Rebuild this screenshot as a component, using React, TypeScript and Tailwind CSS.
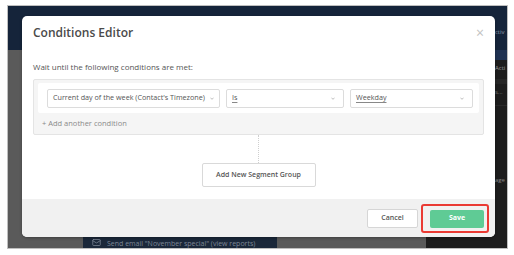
import { Mail } from 'lucide-react'

function Chevron() {
  return (
    <svg width="4" height="3" viewBox="0 0 4 3" className="shrink-0">
      <path d="M0.5 1 L2 2.2 L3.5 1" fill="none" stroke="#a0a0a0" strokeWidth="0.7" />
    </svg>
  )
}

function Select({ label, width, underline }: { label: string; width: string; underline?: boolean }) {
  return (
    <div
      className={`flex h-[19px] items-center gap-[5px] rounded-[2px] border border-[#dcdcdc] bg-white pl-[5px] pr-[8px] ${width} ${underline ? 'justify-between' : ''}`}
    >
      <span
        className={`whitespace-nowrap text-[7.2px] leading-none text-[#555] ${underline ? 'underline decoration-[#888] underline-offset-[1.5px]' : ''}`}
      >
        {label}
      </span>
      <Chevron />
    </div>
  )
}

export default function App() {
  return (
    <div className="h-[255px] w-[514px] bg-white pl-[7px] pt-[5px] font-['Open_Sans',sans-serif]">
      <div className="relative h-[244px] w-[501px] overflow-hidden border border-[#bfbfbf]">
        {/* page behind the modal */}
        <div className="flex h-full flex-col bg-[#5a5a5a]">
          <div className="flex h-[44px] flex-col items-end bg-[#15243a]">
            <span className="mt-[23px] w-[12px] overflow-hidden whitespace-nowrap text-[6px] leading-none text-[#8c97a8]">ctiv</span>
          </div>
          <div className="flex flex-1">
            <div className="flex flex-1 flex-col justify-end">
              <div className="ml-[75px] flex h-[15px] w-[194px] items-end gap-[6px] bg-[#1b283a] pb-[1px] pl-[9px]">
                <Mail className="h-[9px] w-[9px] text-[#7d8796]" strokeWidth={2} />
                <span className="text-[7px] leading-none text-[#7d8796]">Send email "November special" (view reports)</span>
              </div>
            </div>
            <div className="flex w-[81px] flex-col bg-[#1d1d1d]">
              <div className="h-[10px] bg-[#1f3252]" />
              <span className="ml-[69px] mt-[5px] text-[6px] leading-none text-[#9b9b9b]">Acti</span>
              <div className="mt-[8px] h-[5px] bg-[#262626]" />
              <span className="ml-[69px] mt-[5px] text-[6px] leading-none text-[#777]">s...</span>
              <div className="mt-[10px] h-[1px] bg-[#2a2a2a]" />
              <span className="ml-[69px] mt-[71px] text-[6px] leading-none text-[#888]">age</span>
            </div>
          </div>
        </div>

        {/* modal */}
        <div className="absolute left-[14px] top-[10px] flex h-[221px] w-[473px] flex-col overflow-hidden rounded-[5px] bg-white shadow-[0_1px_3px_rgba(0,0,0,0.3)]">
          <div className="flex items-center justify-between pl-[11px] pr-[11px] pt-[10px]">
            <h1 className="text-[12px] font-semibold leading-[14px] text-[#4a4a4a]">Conditions Editor</h1>
            <span className="text-[14px] leading-none text-[#c2c2c2]">×</span>
          </div>

          <p className="mt-[22px] pl-[11px] text-[8px] leading-[10px] text-[#555]">Wait until the following conditions are met:</p>

          <div className="mx-[11px] mt-[7px] h-[56px] rounded-[2px] border border-[#e4e4e4] bg-[#f5f5f5] px-[4px] pt-[3px]">
            <div className="flex h-[30px] items-center gap-[6px] rounded-[2px] bg-white pl-[9px]">
              <Select label="Current day of the week (Contact's Timezone)" width="w-[173px]" />
              <Select label="Is" width="w-[118px]" underline />
              <Select label="Weekday" width="w-[123px]" underline />
            </div>
            <p className="mt-[5px] pl-[4px] text-[7.5px] leading-[10px] text-[#8a8a8a]">+ Add another condition</p>
          </div>

          <div className="mx-auto h-[28px] border-l border-dotted border-[#cfcfcf]" />

          <button className="mx-auto flex h-[24px] w-[114px] items-center justify-center rounded-[2px] border border-[#d9d9d9] bg-white text-[7px] font-semibold text-[#555]">
            Add New Segment Group
          </button>

          <div className="mt-[12px] flex flex-1 items-center justify-end gap-[3px] bg-[#f1f1f1] pr-[6px]">
            <button className="flex h-[19px] w-[51px] items-center justify-center rounded-[2px] border border-[#d6d6d6] bg-white text-[7px] font-semibold text-[#555]">
              Cancel
            </button>
            <div className="rounded-[3px] border-2 border-[#ea3a33] pb-[3px] pl-[7px] pr-[3px] pt-[4px]">
              <button className="flex h-[18px] w-[54px] items-center justify-center rounded-[2px] bg-[#5fcb95] text-[7px] font-bold text-white">
                Save
              </button>
            </div>
          </div>
        </div>
      </div>
    </div>
  )
}
